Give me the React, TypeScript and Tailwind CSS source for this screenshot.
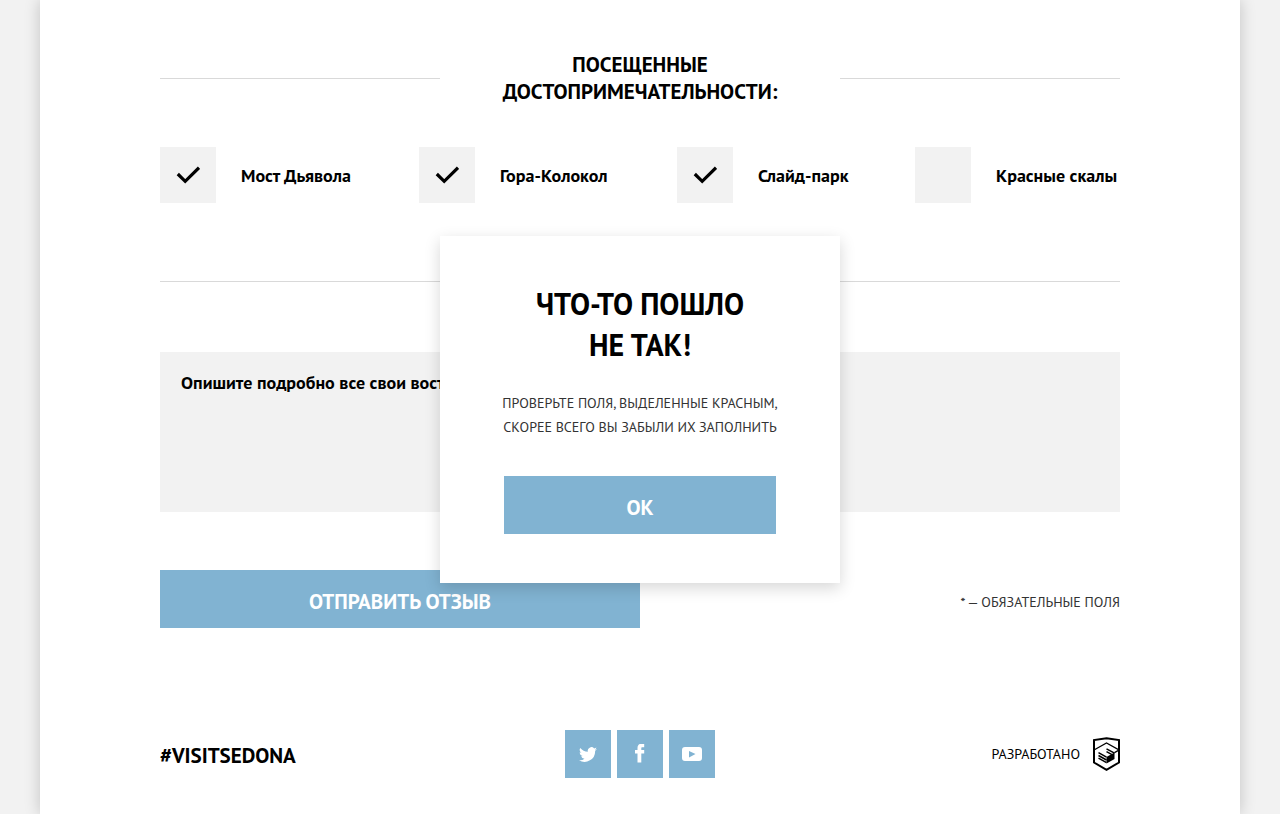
import { useState } from 'react';

const sights = [
  { id: 'bridge', label: 'Мост Дьявола', visited: true },
  { id: 'bell', label: 'Гора-Колокол', visited: true },
  { id: 'slide', label: 'Слайд-парк', visited: true },
  { id: 'rocks', label: 'Красные скалы', visited: false },
];

function Sight({ id, label, visited }: { id: string; label: string; visited: boolean }) {
  return (
    <label htmlFor={id} className="flex cursor-pointer items-center gap-[25px] text-[18px] font-bold whitespace-nowrap">
      <span className="grid size-14 shrink-0 bg-[#f2f2f2]">
        <input
          id={id}
          type="checkbox"
          defaultChecked={visited}
          className="peer col-start-1 row-start-1 size-14 cursor-pointer appearance-none"
        />
        <svg
          viewBox="0 0 24 18"
          className="pointer-events-none invisible col-start-1 row-start-1 h-[18px] w-6 place-self-center peer-checked:visible"
          fill="none"
          stroke="#000"
          strokeWidth="3.2"
          aria-hidden="true"
        >
          <path d="M1.8 8 9.200 15.300 23 1.700" />
        </svg>
      </span>
      {label}
    </label>
  );
}

function TwitterIcon() {
  return (
    <svg viewBox="0 2 24 20" className="h-[15px] w-[18px]" fill="#fff" aria-hidden="true">
      <path d="M24 4.6a10 10 0 0 1-2.8.8 4.9 4.9 0 0 0 2.1-2.7 10 10 0 0 1-3.1 1.2 4.9 4.9 0 0 0-8.4 4.5A14 14 0 0 1 1.7 3.2a4.9 4.9 0 0 0 1.5 6.5 4.9 4.9 0 0 1-2.2-.6 4.9 4.9 0 0 0 3.9 4.9 5 5 0 0 1-2.2.1 4.9 4.9 0 0 0 4.6 3.4A9.9 9.9 0 0 1 0 19.5 14 14 0 0 0 21.5 7.1 10 10 0 0 0 24 4.6z" />
    </svg>
  );
}

function FacebookIcon() {
  return (
    <svg viewBox="0 0 10 20" className="h-5 w-2.5" fill="#fff" aria-hidden="true">
      <path d="M2.500 18.500V9.500H0V6h2.500V4C2.500 1 4.200-.3 6.500-.3h2.700v3.500H7.300C6.500 3.200 6.300 3.600 6.300 4.300V6h2.900v3.500H6.300v9z" />
    </svg>
  );
}

function YoutubeIcon() {
  return (
    <svg viewBox="0 0 20 14" className="h-3.5 w-5" fill="#fff" fillRule="evenodd" aria-hidden="true">
      <path d="M3 0h14q3 0 3 3v8q0 3-3 3H3q-3 0-3-3V3q0-3 3-3zm4 4v6.500L13.500 7z" />
    </svg>
  );
}

function AcademyLogo() {
  return (
    <svg viewBox="0 0 28 34" className="h-[34px] w-7" fill="none" stroke="#000" aria-hidden="true">
      <path d="M14.500 1.200 27 3V25.500L14.500 32.800 2 25.500V3z" strokeWidth="2" />
      <path d="M2 13 14.500 6 27 13l-4.500 2.600" strokeWidth="1.300" />
      <path d="M14.500 20 22.500 15.500v6.500L14.500 26.500z" fill="#000" stroke="none" />
      <path d="M14.500 11.800 22.500 16.200M14.500 14.600l5.500 3" strokeWidth="1.500" />
      <path d="M6.500 15.700l8 4.500M6.500 18.500l8 4.500M6.500 21.200l8 4.500" strokeWidth="1.500" />
    </svg>
  );
}

const socials = [
  { name: 'Twitter', Icon: TwitterIcon },
  { name: 'Facebook', Icon: FacebookIcon },
  { name: 'YouTube', Icon: YoutubeIcon },
];

export default function App() {
  const [alertOpen, setAlertOpen] = useState(true);

  return (
    <div className="relative min-h-screen bg-[#f2f2f2] px-10 font-['PT_Sans','Noto_Sans',sans-serif] text-black">
      <div className="mx-auto min-h-screen max-w-[1200px] bg-white px-[120px] pb-9 shadow-[0_0_15px_rgba(0,0,0,0.2)]">
        <form onSubmit={(e) => e.preventDefault()}>
          <div role="group" aria-labelledby="sights-title">
            <div className="flex items-center pt-[51px]">
              <span className="h-px flex-1 bg-[#d9d9d9]" />
              <h2 id="sights-title" className="w-[400px] text-center text-[21px] leading-[27px] font-bold uppercase">
                Посещенные
                <br />
                достопримечательности:
              </h2>
              <span className="h-px flex-1 bg-[#d9d9d9]" />
            </div>
            <div className="mt-[42px] grid grid-cols-[259fr_258fr_238fr_205fr]">
              {sights.map((sight) => (
                <Sight key={sight.id} {...sight} />
              ))}
            </div>
          </div>
          <hr className="mt-[78px] border-[#d9d9d9]" />
          <textarea
            aria-label="Отзыв"
            placeholder="Опишите подробно все свои восторги"
            className="mt-[70px] block h-40 w-full resize-none bg-[#f2f2f2] px-[21px] py-[19px] text-[18px] leading-6 font-bold placeholder:text-black"
          />
          <div className="mt-[58px] flex items-center justify-between">
            <button type="submit" className="h-[58px] w-1/2 bg-[#81b3d2] pt-1.5 text-[21px] font-bold text-white uppercase">
              Отправить отзыв
            </button>
            <p className="pt-1.5 text-[14px] text-[#333] uppercase">* — обязательные поля</p>
          </div>
        </form>
        <footer className="mt-[102px] grid grid-cols-3 items-center">
          <p className="pt-1 text-[21px] font-bold">#VISITSEDONA</p>
          <div className="flex justify-center gap-1.5">
            {socials.map(({ name, Icon }) => (
              <a key={name} href="#" aria-label={name} className="flex h-12 w-[46px] items-center justify-center bg-[#81b3d2]">
                <Icon />
              </a>
            ))}
          </div>
          <a href="#" className="flex items-center justify-end gap-3 text-[14px] uppercase">
            Разработано
            <AcademyLogo />
          </a>
        </footer>
      </div>

      {alertOpen && (
        <div
          role="alertdialog"
          aria-labelledby="alert-title"
          aria-describedby="alert-text"
          className="absolute top-[236px] left-1/2 w-[400px] -translate-x-1/2 bg-white px-16 pt-[47px] pb-[49px] text-center shadow-[0_5px_15px_rgba(0,0,0,0.16)]"
        >
          <h2 id="alert-title" className="text-[30px] leading-[41px] font-bold uppercase">
            Что-то пошло
            <br />
            не так!
          </h2>
          <p id="alert-text" className="-mx-8 mt-[26px] text-[14px] leading-6 text-[#333] uppercase">
            Проверьте поля, выделенные красным,
            <br />
            скорее всего вы забыли их заполнить
          </p>
          <button
            type="button"
            onClick={() => setAlertOpen(false)}
            className="mt-[37px] block h-[58px] w-full bg-[#81b3d2] pt-1.5 text-[21px] font-bold text-white uppercase"
          >
            Ок
          </button>
        </div>
      )}
    </div>
  );
}
